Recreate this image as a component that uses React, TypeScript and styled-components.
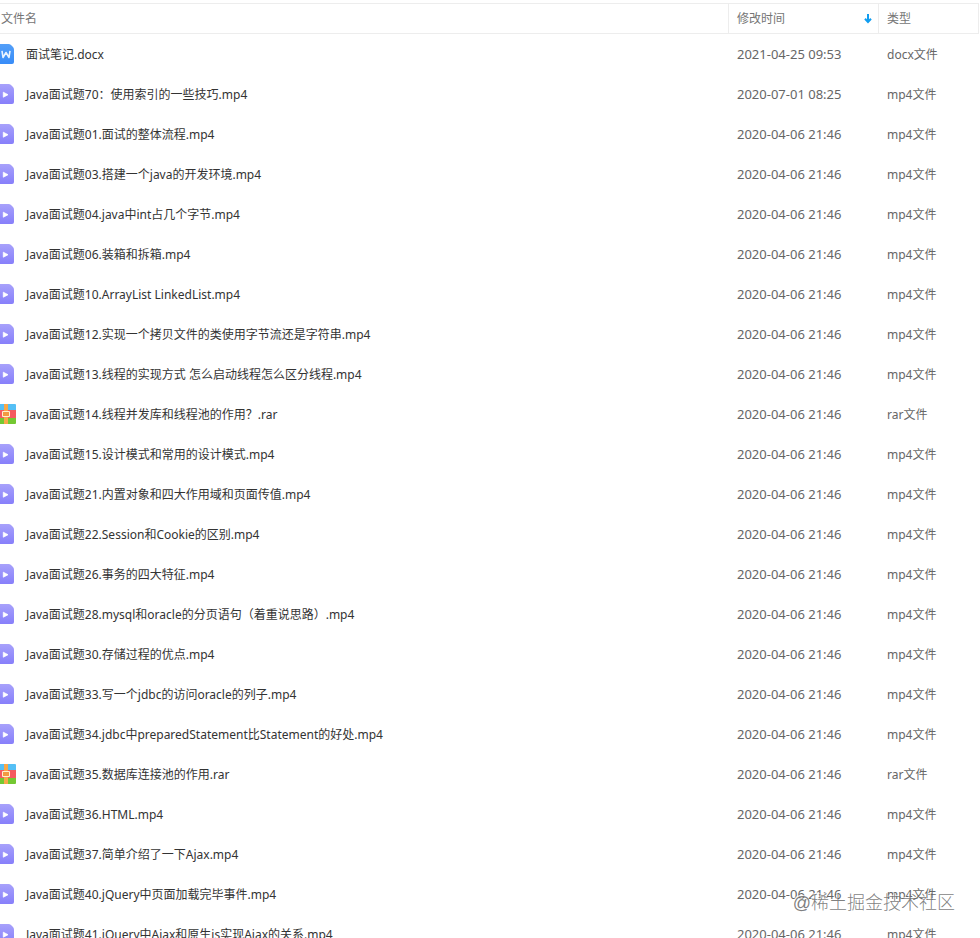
import React from "react";
import styled, { createGlobalStyle } from "styled-components";

const GlobalStyle = createGlobalStyle`
  * { box-sizing: border-box; }
  body {
    margin: 0;
    background: #fff;
    font-family: "Noto Sans", "Noto Sans CJK SC", sans-serif;
    font-size: 12px;
    line-height: 20px;
  }
`;

const Page = styled.main`
  position: relative;
  height: 100vh;
  overflow: hidden;
  padding: 3px 1px 0 0;
`;

const FileTable = styled.table`
  width: 100%;
  table-layout: fixed;
  border-collapse: separate;
  border-spacing: 0;
`;

const NameCol = styled.col``;
const TimeCol = styled.col`
  width: 150px;
`;
const TypeCol = styled.col`
  width: 100px;
`;

const HeadCell = styled.th<{ $first?: boolean }>`
  height: 31px;
  padding: 0 6px 0 ${(p) => (p.$first ? "1px" : "8px")};
  border: 1px solid #ededed;
  border-left: 0;
  color: #757575;
  font-weight: 400;
  text-align: left;
`;

const SortButton = styled.button`
  display: flex;
  align-items: center;
  justify-content: space-between;
  width: 100%;
  padding: 0;
  border: 0;
  background: none;
  color: inherit;
  font: inherit;
  cursor: pointer;
`;

const Cell = styled.td`
  height: 40px;
  padding: 2px 0 0 8px;
  color: #666;
  white-space: nowrap;
`;

const NameCell = styled(Cell)`
  padding: 0;
  color: #333;
`;

const TimeCell = styled(Cell)`
  padding-top: 0;
  font-size: 13px;
`;

const FileName = styled.div`
  display: flex;
  align-items: center;
`;

const NameText = styled.span`
  padding-top: 2px;
`;

const IconSlot = styled.span`
  display: flex;
  flex: none;
  width: 26px;
`;

const Watermark = styled.div`
  position: absolute;
  right: 25px;
  bottom: 23px;
  color: rgba(105, 105, 105, 0.85);
  font-family: "Liberation Sans", "Noto Sans CJK SC", sans-serif;
  font-size: 18px;
  font-weight: 300;
  line-height: 24px;
  text-shadow: -1px -1px 0 rgba(255, 255, 255, 0.8);
  pointer-events: none;
`;

const WordIcon = () => (
  <svg width="14" height="20" viewBox="6 0 14 20" aria-hidden="true">
    <defs>
      <linearGradient id="word" x1="0" y1="0" x2="0" y2="1">
        <stop offset="0" stopColor="#549ff8" />
        <stop offset="1" stopColor="#378cf8" />
      </linearGradient>
    </defs>
    <path d="M2 0H14.5Q16 0 17 1L19 3Q20 4 20 5.5V18Q20 20 18 20H2Q0 20 0 18V2Q0 0 2 0Z" fill="url(#word)" />
    <path d="M8 6.8L9 13.5L12 8.5L15 13.5L16 6.8" fill="none" stroke="#e9f3ff" strokeWidth="1.6" strokeLinejoin="round" />
  </svg>
);

const VideoIcon = () => (
  <svg width="14" height="20" viewBox="6 0 14 20" aria-hidden="true">
    <defs>
      <linearGradient id="video" x1="0" y1="0" x2="0" y2="1">
        <stop offset="0" stopColor="#a7a1fb" />
        <stop offset="1" stopColor="#877ffa" />
      </linearGradient>
    </defs>
    <path d="M2 0H14.5Q16 0 17 1L19 3Q20 4 20 5.5V18Q20 20 18 20H2Q0 20 0 18V2Q0 0 2 0Z" fill="url(#video)" />
    <path d="M9.3 8.2V13.2L14 10.7Z" fill="#fff" stroke="#fff" strokeWidth=".8" strokeLinejoin="round" />
  </svg>
);

const ArchiveIcon = () => (
  <svg width="16" height="20" viewBox="4 0 16 20" aria-hidden="true">
    <path d="M0 0H19Q20 0 20 1V7H0Z" fill="#55bff5" />
    <path d="M0 6H20V14H0Z" fill="#f55a60" />
    <path d="M0 14H20V19Q20 20 19 20H0Z" fill="#74c832" />
    <path d="M8 0H12V20H8Z" fill="#f9a848" />
    <path d="M6.5 7.5H13.5V12.5H6.5Z" fill="#f29a42" stroke="#fff1cf" strokeWidth="1" />
  </svg>
);

const SortArrow = () => (
  <svg width="8" height="10" viewBox="0 0 8 10" aria-hidden="true">
    <path d="M4 0V8M1 4.8L4 8L7 4.8" fill="none" stroke="#109df0" strokeWidth="2" />
  </svg>
);

const icons = { docx: WordIcon, mp4: VideoIcon, rar: ArchiveIcon };
type Kind = keyof typeof icons;

const DEFAULT_TIME = "2020-04-06 21:46";

const files: { name: string; time?: string }[] = [
  { name: "面试笔记.docx", time: "2021-04-25 09:53" },
  { name: "Java面试题70：使用索引的一些技巧.mp4", time: "2020-07-01 08:25" },
  { name: "Java面试题01.面试的整体流程.mp4" },
  { name: "Java面试题03.搭建一个java的开发环境.mp4" },
  { name: "Java面试题04.java中int占几个字节.mp4" },
  { name: "Java面试题06.装箱和拆箱.mp4" },
  { name: "Java面试题10.ArrayList LinkedList.mp4" },
  { name: "Java面试题12.实现一个拷贝文件的类使用字节流还是字符串.mp4" },
  { name: "Java面试题13.线程的实现方式 怎么启动线程怎么区分线程.mp4" },
  { name: "Java面试题14.线程并发库和线程池的作用？.rar" },
  { name: "Java面试题15.设计模式和常用的设计模式.mp4" },
  { name: "Java面试题21.内置对象和四大作用域和页面传值.mp4" },
  { name: "Java面试题22.Session和Cookie的区别.mp4" },
  { name: "Java面试题26.事务的四大特征.mp4" },
  { name: "Java面试题28.mysql和oracle的分页语句（着重说思路）.mp4" },
  { name: "Java面试题30.存储过程的优点.mp4" },
  { name: "Java面试题33.写一个jdbc的访问oracle的列子.mp4" },
  { name: "Java面试题34.jdbc中preparedStatement比Statement的好处.mp4" },
  { name: "Java面试题35.数据库连接池的作用.rar" },
  { name: "Java面试题36.HTML.mp4" },
  { name: "Java面试题37.简单介绍了一下Ajax.mp4" },
  { name: "Java面试题40.jQuery中页面加载完毕事件.mp4" },
  { name: "Java面试题41.jQuery中Ajax和原生js实现Ajax的关系.mp4" },
];

const FileRow = ({ name, time = DEFAULT_TIME }: { name: string; time?: string }) => {
  const kind = name.split(".").pop() as Kind;
  const Icon = icons[kind];
  return (
    <tr>
      <NameCell>
        <FileName>
          <IconSlot>
            <Icon />
          </IconSlot>
          <NameText>{name}</NameText>
        </FileName>
      </NameCell>
      <TimeCell>{time}</TimeCell>
      <Cell>{`${kind}文件`}</Cell>
    </tr>
  );
};

export default function App() {
  return (
    <Page>
      <GlobalStyle />
      <FileTable>
        <colgroup>
          <NameCol />
          <TimeCol />
          <TypeCol />
        </colgroup>
        <thead>
          <tr>
            <HeadCell $first scope="col">文件名</HeadCell>
            <HeadCell scope="col" aria-sort="descending">
              <SortButton type="button">
                修改时间
                <SortArrow />
              </SortButton>
            </HeadCell>
            <HeadCell scope="col">类型</HeadCell>
          </tr>
        </thead>
        <tbody>
          {files.map((file) => (
            <FileRow key={file.name} {...file} />
          ))}
        </tbody>
      </FileTable>
      <Watermark>@稀土掘金技术社区</Watermark>
    </Page>
  );
}
